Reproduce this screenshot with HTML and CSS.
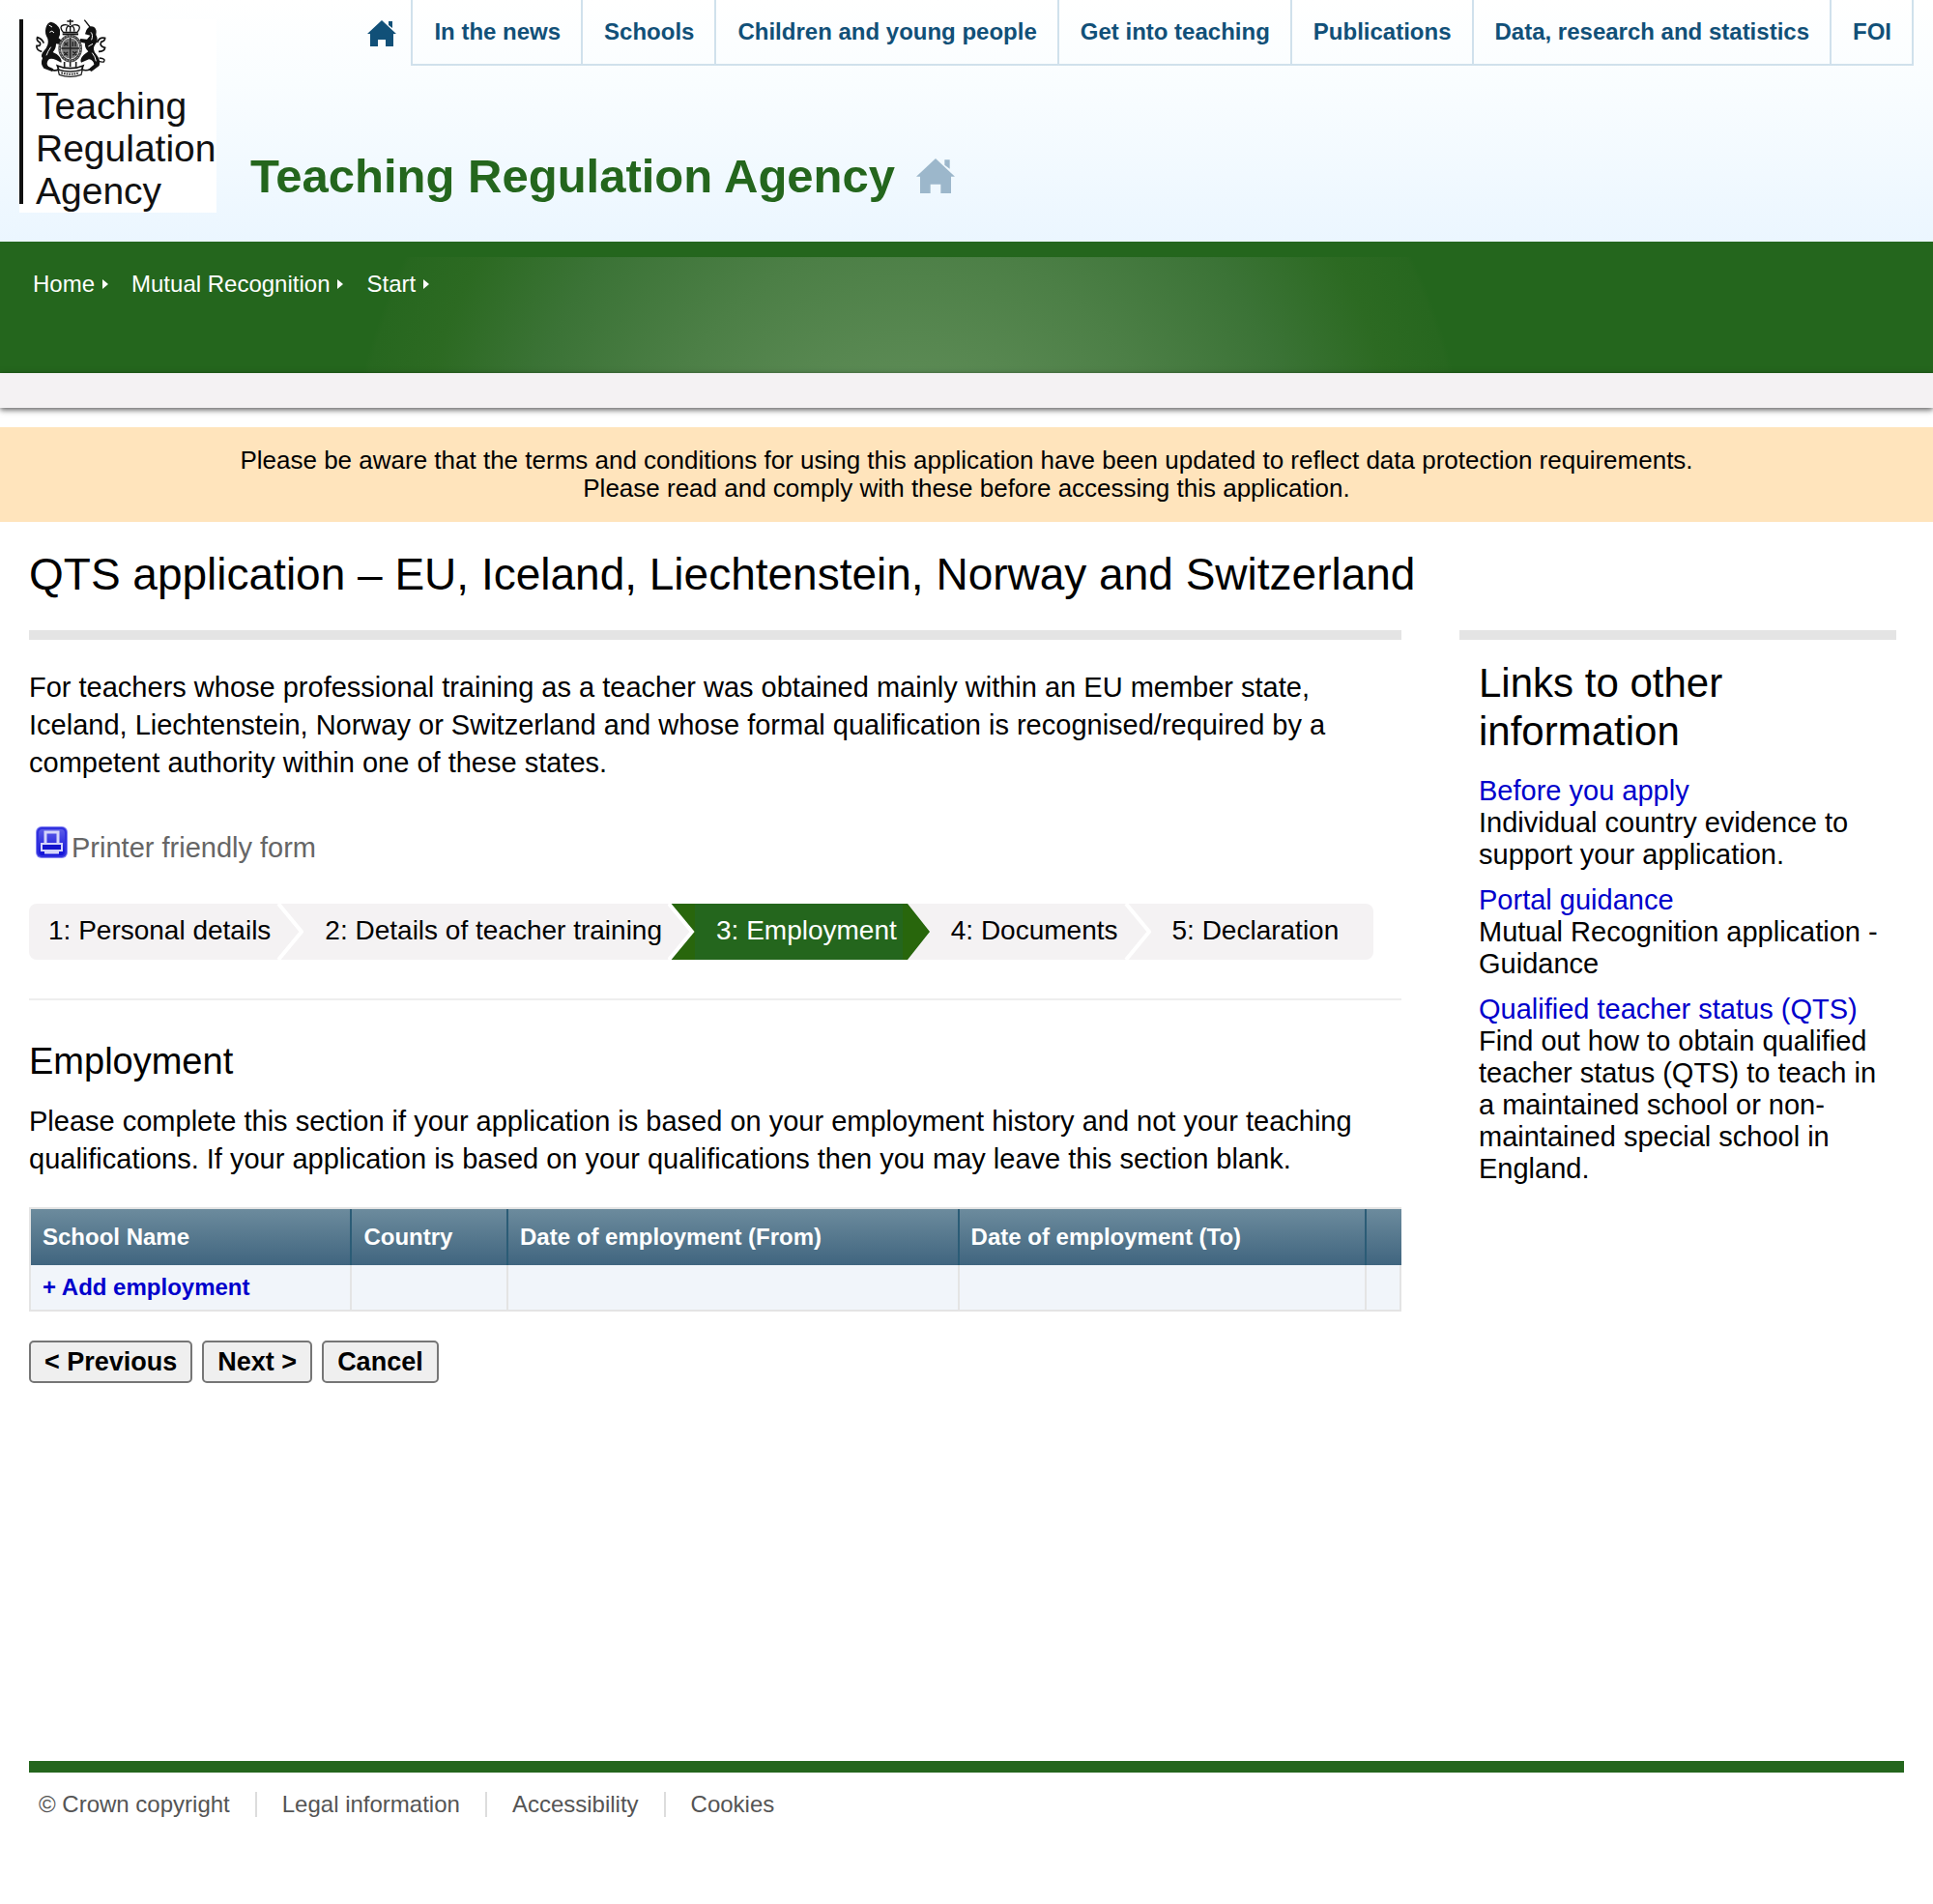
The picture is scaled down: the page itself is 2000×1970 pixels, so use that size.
FILE: index.html
```html
<!DOCTYPE html>
<html lang="en">
<head>
<meta charset="utf-8">
<meta name="viewport" content="width=device-width, initial-scale=1">
<title>QTS application - Employment</title>
<link rel="stylesheet" href="styles.css">
</head>
<body>
<svg class="defs" aria-hidden="true">
  <symbol id="house" viewBox="0 0 30 27">
    <path d="M15 0 L30 14 H27 V27 H19 V20 H11 V27 H3 V14 H0 Z M22 1 H26 V8 L22 5 Z"/>
  </symbol>
  <symbol id="chevron" viewBox="0 0 28 58">
    <path d="M2 0 L26 29 L2 58" fill="none" stroke="#fff" stroke-width="4"/>
  </symbol>
</svg>

<header class="header">
  <a class="logo" href="#" aria-label="Teaching Regulation Agency">
    <span class="logo-bar"></span>
    <span class="logo-body">
      <svg class="crest" viewBox="65 12 219 180" aria-hidden="true">
        <g fill="none" stroke="#111" stroke-width="4">
          <path d="M172 10 V30 M162 18 H182"/>
          <path d="M150 52 Q136 34 150 30 Q164 26 172 36 Q180 26 194 30 Q208 34 194 52 Z"/>
          <path d="M160 50 Q158 38 166 32 M184 50 Q186 38 178 32 M172 34 V50"/>
          <path d="M148 58 H197" stroke-width="6"/>
          <path d="M84 112 Q66 108 68 94 Q82 96 78 84 Q66 78 70 68 Q84 72 90 86" stroke-width="5"/>
          <path d="M260 112 Q278 112 280 100 Q262 96 268 82 Q280 80 280 70 Q262 66 256 84" stroke-width="5"/>
          <path d="M216 14 L238 42" stroke-width="4"/>
          <path d="M262 132 Q284 134 276 144 Q260 146 250 136" stroke-width="4"/>
        </g>
        <path fill="#111" d="M96 40 Q100 22 112 20 Q132 24 140 44 Q142 60 136 70 L146 78 L142 90 L128 88 Q128 104 118 114 L130 120 Q148 134 144 146 L128 138 Q110 130 104 138 Q96 150 104 158 L120 166 L116 174 L90 164 Q78 150 86 132 Q78 124 90 110 Q108 92 102 72 Q92 56 96 40 Z"/>
        <path fill="#111" d="M222 46 Q232 28 246 36 Q256 44 252 60 Q262 78 248 92 Q240 104 252 120 Q268 138 262 156 L238 174 L228 168 L246 152 Q244 138 230 136 L206 146 Q200 136 214 122 L228 112 Q216 100 218 86 L200 82 L204 72 L224 74 L234 62 L218 58 Z"/>
        <path fill="none" stroke="#fff" stroke-width="3" d="M108 52 Q116 44 122 54 M112 98 Q102 112 98 124 M236 52 Q244 60 238 76 M228 96 L242 88 M240 116 Q250 128 252 142 M106 30 L116 36"/>
        <ellipse cx="172" cy="102" rx="37" ry="43" fill="#444"/>
        <ellipse cx="172" cy="102" rx="28" ry="33" fill="#777" stroke="#ddd" stroke-width="3"/>
        <path d="M172 69 V135 M144 102 H200 M153 84 L165 94 M153 94 L165 84 M180 82 V96 M188 80 V96 M152 114 L164 124 M152 124 L164 114 M180 112 L192 124 M180 124 L192 112" fill="none" stroke="#222" stroke-width="4"/>
        <path fill="none" stroke="#eee" stroke-width="2" stroke-dasharray="4 5" d="M172 63 A33 39 0 0 0 172 141 A33 39 0 0 0 172 63"/>
        <path d="M98 158 Q116 176 136 168 L132 156 Q150 164 172 164 Q194 164 212 156 L208 168 Q230 176 248 156" fill="none" stroke="#111" stroke-width="5"/>
        <path d="M134 168 Q172 180 210 168 L206 184 Q172 196 138 184 Z" fill="#fff" stroke="#222" stroke-width="4"/>
        <path d="M144 178 Q172 186 200 178" fill="none" stroke="#333" stroke-width="6" stroke-dasharray="5 3"/>
        <path d="M154 144 V164 M190 144 V164 M172 144 V160" fill="none" stroke="#222" stroke-width="5"/>
      </svg>
      <span class="logo-text">Teaching<br>Regulation<br>Agency</span>
    </span>
  </a>
  <div class="header-main">
    <nav class="top-nav" aria-label="Main">
      <a class="nav-home" href="#" aria-label="Home"><svg aria-hidden="true"><use href="#house"/></svg></a>
      <ul class="nav-list">
        <li><a href="#">In the news</a></li>
        <li><a href="#">Schools</a></li>
        <li><a href="#">Children and young people</a></li>
        <li><a href="#">Get into teaching</a></li>
        <li><a href="#">Publications</a></li>
        <li><a href="#">Data, research and statistics</a></li>
        <li><a href="#">FOI</a></li>
      </ul>
    </nav>
    <div class="site-title">
      <span>Teaching Regulation Agency</span>
      <a href="#" aria-label="Agency home"><svg aria-hidden="true"><use href="#house"/></svg></a>
    </div>
  </div>
</header>

<nav class="banner" aria-label="Breadcrumb">
  <ol class="crumbs">
    <li><a href="#">Home</a></li>
    <li><a href="#">Mutual Recognition</a></li>
    <li><a href="#">Start</a></li>
  </ol>
</nav>
<div class="sub-banner"></div>

<p class="notice">Please be aware that the terms and conditions for using this application have been updated to reflect data protection requirements.<br>Please read and comply with these before accessing this application.</p>

<div class="page">
  <h1>QTS application – EU, Iceland, Liechtenstein, Norway and Switzerland</h1>
  <div class="columns">
    <main class="content">
      <p class="intro">For teachers whose professional training as a teacher was obtained mainly within an EU member state, Iceland, Liechtenstein, Norway or Switzerland and whose formal qualification is recognised/required by a competent authority within one of these states.</p>
      <a class="print" href="#">
        <svg viewBox="0 0 33 33" aria-hidden="true">
          <defs><linearGradient id="ink" x1="0" y1="0" x2="0" y2="1"><stop offset="0" stop-color="#5b5be8"/><stop offset="1" stop-color="#1010d8"/></linearGradient></defs>
          <rect x="0" y="0" width="33" height="33" rx="6" fill="#8585f2"/>
          <rect x="1" y="1" width="31" height="31" rx="5" fill="#3030de"/>
          <rect x="3" y="3" width="27" height="27" rx="4" fill="url(#ink)"/>
          <path d="M10 18 V6 H23 V18" fill="none" stroke="#d4d4fa" stroke-width="3"/>
          <path d="M6 18 H27 V25 H6 Z" fill="#1414cc" stroke="#d4d4fa" stroke-width="2"/>
          <path d="M9 27 H24" stroke="#d4d4fa" stroke-width="3"/>
        </svg>
        <span>Printer friendly form</span>
      </a>

      <ol class="steps">
        <li>1: Personal details<svg class="edge" aria-hidden="true"><use href="#chevron"/></svg></li>
        <li>2: Details of teacher training<svg class="edge" viewBox="0 0 28 58" aria-hidden="true"><path d="M2 0 H28 V58 H2 L26 29 Z" fill="#28660c"/><path d="M1 0 L25 29 L1 58" fill="none" stroke="#fff" stroke-width="4"/></svg></li>
        <li class="current" aria-current="step">3: Employment<svg class="edge" viewBox="0 0 28 58" aria-hidden="true"><path d="M0 0 H5 L28 29 L5 58 H0 Z" fill="#28660c"/><path d="M5 0 H28 V58 H5 L28 29 Z" fill="#f4f2f3"/></svg></li>
        <li>4: Documents<svg class="edge" aria-hidden="true"><use href="#chevron"/></svg></li>
        <li>5: Declaration</li>
      </ol>

      <section class="employment">
        <h2>Employment</h2>
        <p>Please complete this section if your application is based on your employment history and not your teaching qualifications. If your application is based on your qualifications then you may leave this section blank.</p>
        <table>
          <colgroup><col class="c-school"><col class="c-country"><col class="c-from"><col class="c-to"><col></colgroup>
          <thead>
            <tr><th scope="col">School Name</th><th scope="col">Country</th><th scope="col">Date of employment (From)</th><th scope="col">Date of employment (To)</th><td></td></tr>
          </thead>
          <tbody>
            <tr><td><a href="#">+ Add employment</a></td><td></td><td></td><td></td><td></td></tr>
          </tbody>
        </table>
        <div class="actions">
          <button type="button">&lt; Previous</button>
          <button type="button">Next &gt;</button>
          <button type="button">Cancel</button>
        </div>
      </section>
    </main>

    <aside class="sidebar">
      <h2>Links to other information</h2>
      <ul>
        <li><a href="#">Before you apply</a><br>Individual country evidence to support your application.</li>
        <li><a href="#">Portal guidance</a><br>Mutual Recognition application - Guidance</li>
        <li><a href="#">Qualified teacher status (QTS)</a><br>Find out how to obtain qualified teacher status (QTS) to teach in a maintained school or non-maintained special school in England.</li>
      </ul>
    </aside>
  </div>
</div>

<footer class="footer">
  <ul>
    <li><a href="#">© Crown copyright</a></li>
    <li><a href="#">Legal information</a></li>
    <li><a href="#">Accessibility</a></li>
    <li><a href="#">Cookies</a></li>
  </ul>
</footer>
</body>
</html>
```
FILE: styles.css
```css
* {
  box-sizing: border-box;
}

body {
  margin: 0;
  background: #fff;
  color: #000;
  font-family: "Liberation Sans", Arial, Helvetica, sans-serif;
  font-size: 29px;
  line-height: 39px;
}

h1, h2, p, ul, ol {
  margin: 0;
  padding: 0;
}

h1, h2 {
  font-weight: normal;
}

ul, ol {
  list-style: none;
}

a {
  color: #0000cc;
  text-decoration: none;
}

svg {
  display: block;
}

.defs {
  display: none;
}

/* Header */
.header {
  display: flex;
  align-items: flex-start;
  gap: 35px;
  padding: 0 20px 30px;
  background: linear-gradient(#fff, #f9fdff 35%, #ebf6ff);
}

.logo {
  display: flex;
  flex: none;
  gap: 13px;
  width: 204px;
  height: 200px;
  margin-top: 20px;
  overflow: hidden;
  background: #fff;
  color: #111;
}

.logo-bar {
  flex: none;
  width: 4px;
  height: 191px;
  background: #111;
}

.crest {
  width: 73px;
  height: 60px;
  margin-bottom: 8px;
}

.logo-text {
  display: block;
  font-size: 39px;
  line-height: 44px;
}

.header-main {
  flex: 1;
}

.top-nav {
  display: flex;
  justify-content: flex-end;
  gap: 15px;
  font-size: 24px;
  font-weight: bold;
  line-height: 66px;
}

.nav-home {
  padding-top: 21px;
}

.nav-home svg {
  width: 30px;
  height: 27px;
  fill: #115078;
}

.nav-list {
  display: flex;
  border-right: 2px solid #d0e1ec;
  border-bottom: 2px solid #d0e1ec;
}

.nav-list a {
  display: block;
  padding: 0 21px 0 22px;
  border-left: 2px solid #d0e1ec;
  color: #115078;
  white-space: nowrap;
}

.site-title {
  display: flex;
  align-items: center;
  gap: 22px;
  margin-top: 84px;
  color: #24661d;
  font-size: 49px;
  font-weight: bold;
  line-height: 60px;
}

.site-title svg {
  width: 40px;
  height: 36px;
  fill: #9cb7cb;
}

/* Breadcrumb banner */
.banner {
  padding: 28px 34px 76px;
  background:
    radial-gradient(circle 580px at 47% 255px, #5f8d58 0%, #5b8a54 23%, #4c7f46 47%, #3b7336 70%, #2c6a22 88%, #27671f 99%, #24661d 100%) 0 16px no-repeat,
    #24661d;
}

.crumbs {
  display: flex;
  gap: 24px;
  font-size: 24px;
  line-height: 32px;
}

.crumbs li {
  display: flex;
  align-items: center;
  gap: 8px;
}

.crumbs li::after {
  content: "";
  border: 5px solid transparent;
  border-right-width: 0;
  border-left: 6px solid #fff;
}

.crumbs a {
  color: #fff;
}

.sub-banner {
  height: 36px;
  background: #f4f2f3;
  box-shadow: 0 2px 6px rgba(0, 0, 0, 0.65);
}

.notice {
  margin-top: 20px;
  padding: 20px;
  background: #ffe4bc;
  font-size: 26px;
  line-height: 29px;
  text-align: center;
}

/* Page body */
.page {
  padding: 26px 38px 0 30px;
}

h1 {
  font-size: 46px;
  line-height: 56px;
}

.columns {
  display: grid;
  grid-template-columns: minmax(0, 1fr) 452px;
  align-items: start;
  gap: 60px;
  margin-top: 30px;
}

.content,
.sidebar {
  border-top: 10px solid #e4e4e4;
}

.intro {
  margin-top: 30px;
}

.print {
  display: inline-flex;
  gap: 4px;
  margin: 46px 0 38px 7px;
  color: #666;
}

.print svg {
  width: 33px;
  height: 33px;
}

.print span {
  padding-top: 3px;
}

.steps {
  display: flex;
  width: fit-content;
  overflow: hidden;
  border-radius: 8px;
  background: #f4f2f3;
  font-size: 28px;
  line-height: 55px;
}

.steps li {
  display: flex;
  gap: 6px;
  height: 58px;
  padding-left: 20px;
  white-space: nowrap;
}

.steps li + li {
  padding-left: 22px;
}

.steps li:last-child {
  padding-right: 36px;
}

.steps .current {
  background: #24661d;
  color: #fff;
}

.edge {
  width: 28px;
  height: 58px;
}

.employment {
  margin-top: 40px;
  padding-top: 40px;
  border-top: 2px solid #eee;
}

.employment h2 {
  margin-bottom: 20px;
  font-size: 38px;
  line-height: 46px;
}

table {
  width: 100%;
  margin-top: 30px;
  border: 2px solid #e4e4e4;
  border-right: 0;
  border-spacing: 0;
  table-layout: fixed;
  font-size: 24px;
  font-weight: bold;
  line-height: 30px;
}

.c-school { width: 23.3%; }
.c-country { width: 11.4%; }
.c-from { width: 32.9%; }
.c-to { width: 29.7%; }

thead {
  background: linear-gradient(#6c8b9d, #40657f);
  color: #fff;
}

th, td {
  padding: 8px 12px;
  border-left: 2px solid #e4e4e4;
  text-align: left;
}

thead th,
thead td {
  padding: 14px 12px;
  border-color: #2b5c76;
}

th:first-child,
td:first-child {
  border-left: 0;
}

tbody td {
  background: #f1f5fa;
}

tbody td:last-child {
  border-right: 2px solid #e4e4e4;
}

.actions {
  display: flex;
  gap: 10px;
  margin-top: 30px;
}

button {
  height: 44px;
  padding: 0 14px;
  border: 2px solid #767676;
  border-radius: 5px;
  background: #efefef;
  color: #000;
  font-family: inherit;
  font-size: 27px;
  font-weight: bold;
  line-height: 38px;
}

/* Sidebar */
.sidebar {
  padding: 20px 14px 0 20px;
  line-height: 33px;
}

.sidebar h2 {
  margin-bottom: 20px;
  font-size: 42px;
  line-height: 50px;
}

.sidebar ul {
  display: grid;
  gap: 14px;
}

/* Footer */
.footer {
  margin: 391px 30px 0;
  padding: 20px 10px 90px;
  border-top: 12px solid #24661d;
  font-size: 24px;
  line-height: 26px;
}

.footer ul {
  display: flex;
}

.footer li + li {
  margin-left: 26px;
  padding-left: 26px;
  border-left: 2px solid #ddd;
}

.footer a {
  color: #555;
}
```
